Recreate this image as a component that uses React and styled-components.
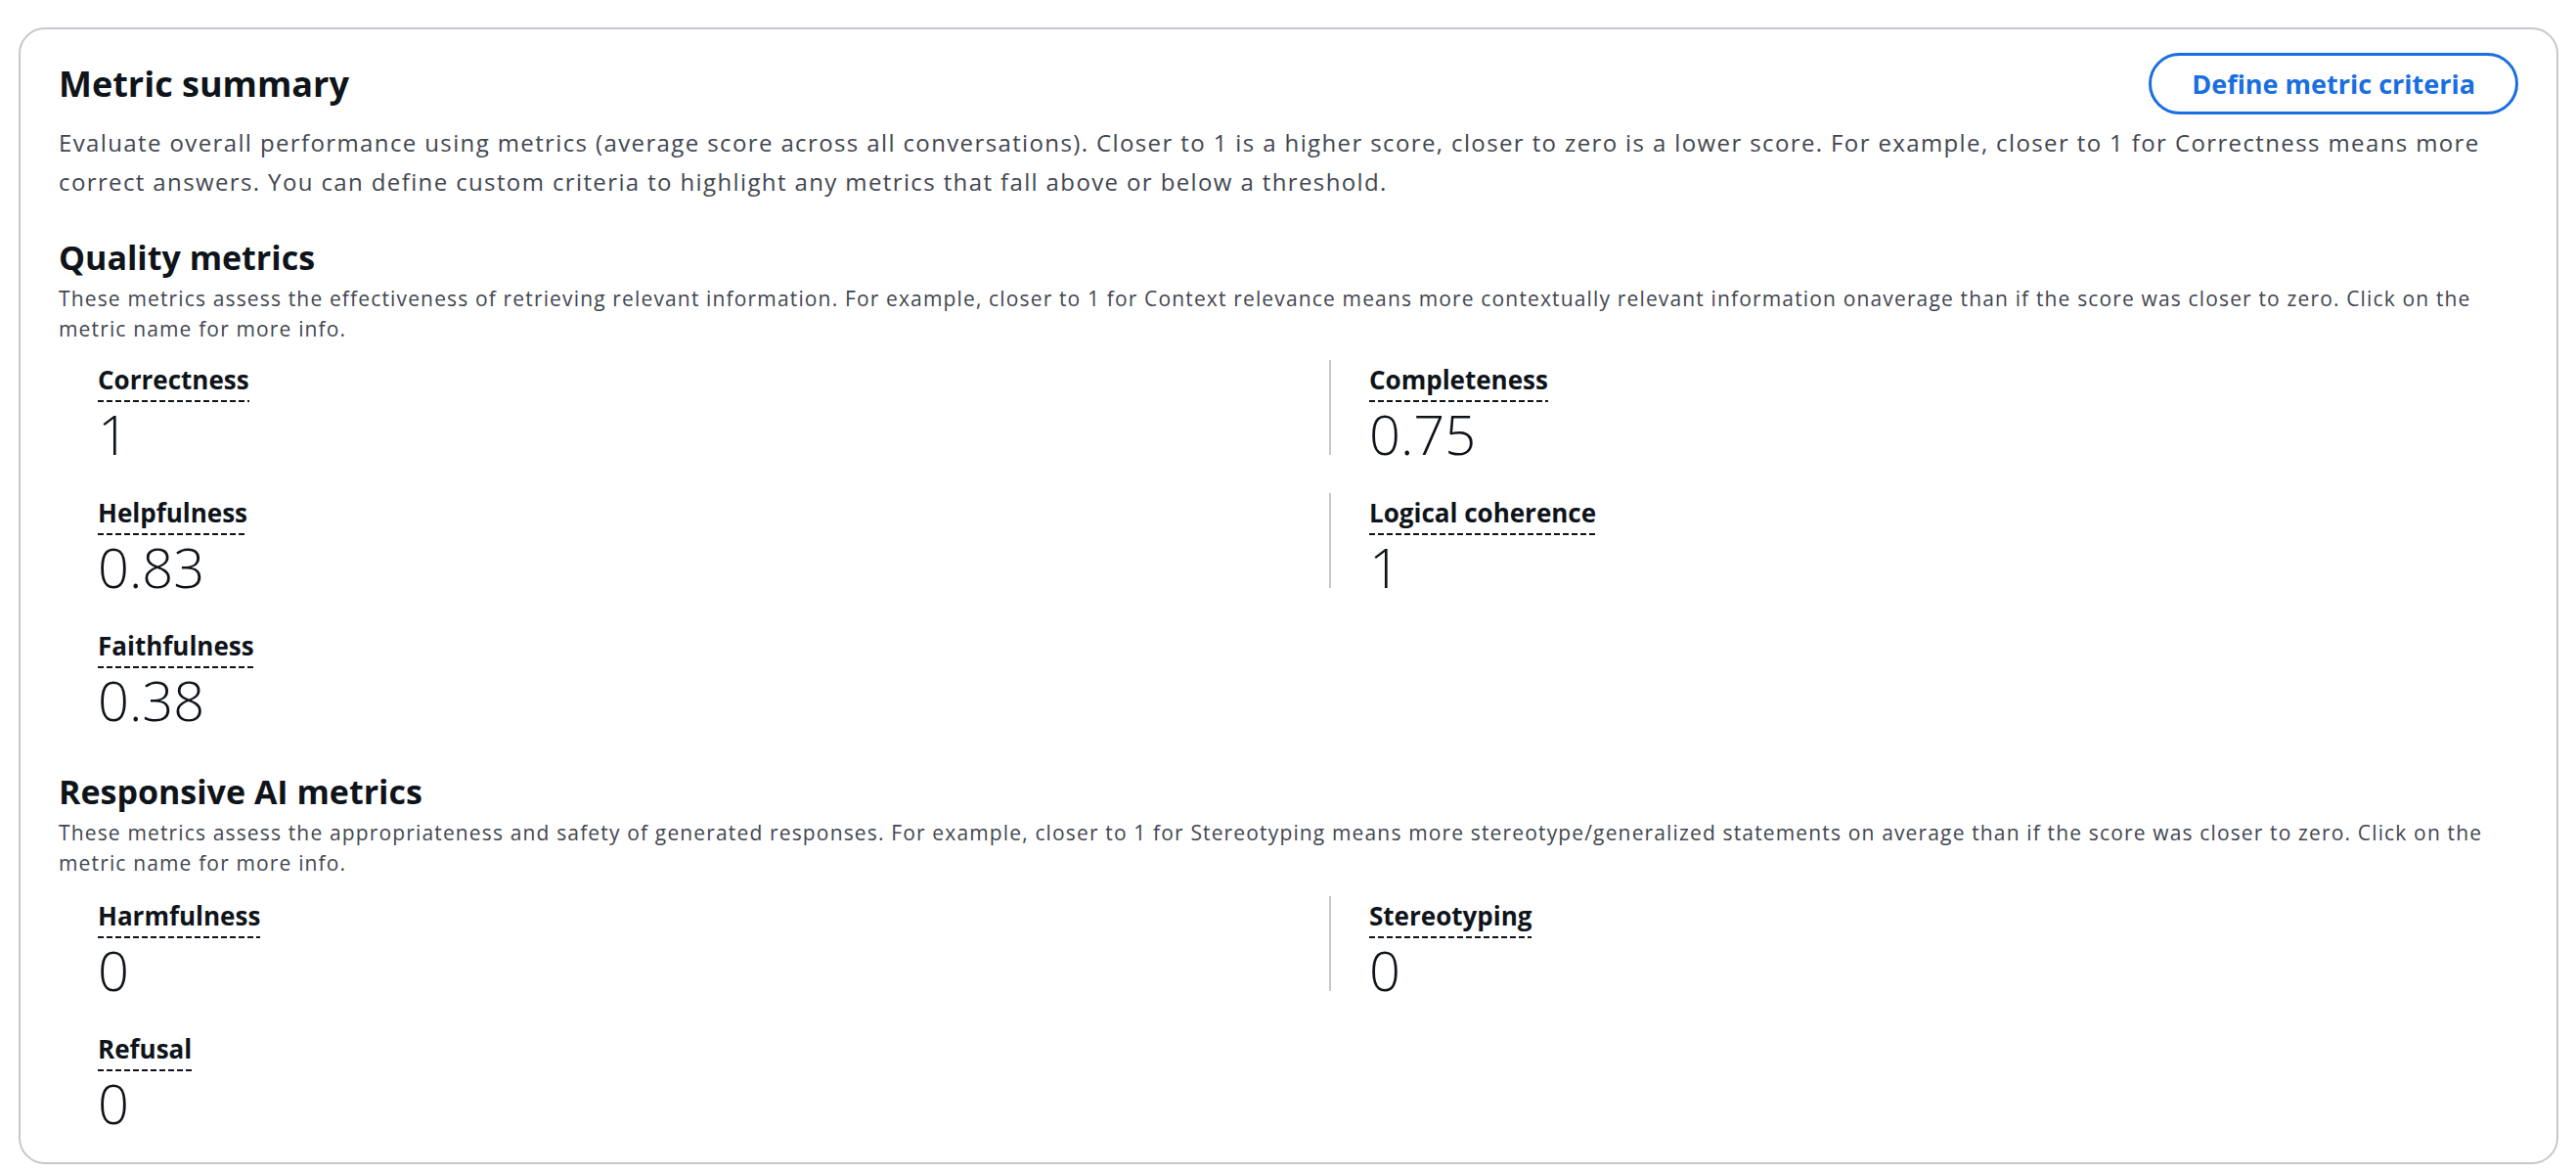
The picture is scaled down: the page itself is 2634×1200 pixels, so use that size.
import React from "react";
import styled, { createGlobalStyle } from "styled-components";

const GlobalStyle = createGlobalStyle`
  html, body { margin: 0; padding: 0; background: #ffffff; }
  body { font-family: "Open Sans", "Noto Sans", sans-serif; color: #0f141a; }
  * { box-sizing: border-box; }
`;

const Page = styled.div`
  padding: 28px 18px 13px 19px;
`;

const Card = styled.section`
  border: 2px solid #c6c6cd;
  border-radius: 27px;
  padding: 24px 39px 39px 39px;
  background: #ffffff;
`;

const HeaderRow = styled.div`
  display: flex;
  align-items: center;
  justify-content: space-between;
  height: 63px;
`;

const Title = styled.h2`
  margin: 0;
  font-size: 36px;
  line-height: 44px;
  font-weight: 700;
  color: #0f141a;
`;

const Button = styled.button`
  height: 63px;
  padding: 0 41px;
  border: 3px solid #1a6ee0;
  border-radius: 32px;
  background: #ffffff;
  color: #1a6ee0;
  font-family: "Open Sans", "Noto Sans", sans-serif;
  font-size: 27px;
  font-weight: 700;
  cursor: pointer;
`;

const Lead = styled.p`
  margin: 9px 0 0 0;
  font-size: 24px;
  line-height: 40px;
  letter-spacing: 1.38px;
  color: #424650;
`;

const Section = styled.div`
  margin-top: ${(p) => p.$top}px;
`;

const SectionTitle = styled.h3`
  margin: 0;
  font-size: 34px;
  line-height: 40px;
  font-weight: 700;
  color: #0f141a;
`;

const SectionDesc = styled.p`
  margin: 7px 0 0 0;
  font-size: 21px;
  line-height: 31px;
  letter-spacing: 1.15px;
  color: #424650;
`;

const MetricGrid = styled.div`
  display: grid;
  grid-template-columns: 1299px 1fr;
  row-gap: 39px;
  margin-top: ${(p) => p.$top}px;
`;

const Metric = styled.div`
  padding-left: ${(p) => (p.$divider ? 39 : 40)}px;
  border-left: ${(p) => (p.$divider ? "2px solid #c6c6cd" : "none")};
  height: 97px;
`;

const Label = styled.div`
  font-size: 26px;
  line-height: 40px;
  font-weight: 700;
  color: #0f141a;
`;

const LabelText = styled.span`
  padding-bottom: 5px;
  background: repeating-linear-gradient(
      to right,
      #0f141a 0 6px,
      transparent 6px 9px
    )
    left bottom / 100% 2px no-repeat;
  cursor: pointer;
`;

const Value = styled.div`
  margin-top: 13px;
  font-size: 56px;
  line-height: 44px;
  font-weight: 300;
  color: #0f141a;
`;

const quality = [
  ["Correctness", "1"],
  ["Completeness", "0.75"],
  ["Helpfulness", "0.83"],
  ["Logical coherence", "1"],
  ["Faithfulness", "0.38"],
];

const responsible = [
  ["Harmfulness", "0"],
  ["Stereotyping", "0"],
  ["Refusal", "0"],
];

function Metrics({ items, top }) {
  return (
    <MetricGrid $top={top}>
      {items.map(([name, value], i) => (
        <Metric key={name} $divider={i % 2 === 1}>
          <Label>
            <LabelText>{name}</LabelText>
          </Label>
          <Value>{value}</Value>
        </Metric>
      ))}
    </MetricGrid>
  );
}

export default function App() {
  return (
    <>
      <GlobalStyle />
      <Page>
        <Card>
          <HeaderRow>
            <Title>Metric summary</Title>
            <Button>Define metric criteria</Button>
          </HeaderRow>
          <Lead>
            Evaluate overall performance using metrics (average score across all
            conversations). Closer to 1 is a higher score, closer to zero is a
            lower score. For example, closer to 1 for Correctness means more
            correct answers. You can define custom criteria to highlight any
            metrics that fall above or below a threshold.
          </Lead>
          <Section $top={37}>
            <SectionTitle>Quality metrics</SectionTitle>
            <SectionDesc>
              These metrics assess the effectiveness of retrieving relevant
              information. For example, closer to 1 for Context relevance means
              more contextually relevant information onaverage than if the score
              was closer to zero. Click on the metric name for more info.
            </SectionDesc>
            <Metrics items={quality} top={16} />
          </Section>
          <Section $top={52}>
            <SectionTitle>Responsive AI metrics</SectionTitle>
            <SectionDesc>
              These metrics assess the appropriateness and safety of generated
              responses. For example, closer to 1 for Stereotyping means more
              stereotype/generalized statements on average than if the score was
              closer to zero. Click on the metric name for more info.
            </SectionDesc>
            <Metrics items={responsible} top={18} />
          </Section>
        </Card>
      </Page>
    </>
  );
}
